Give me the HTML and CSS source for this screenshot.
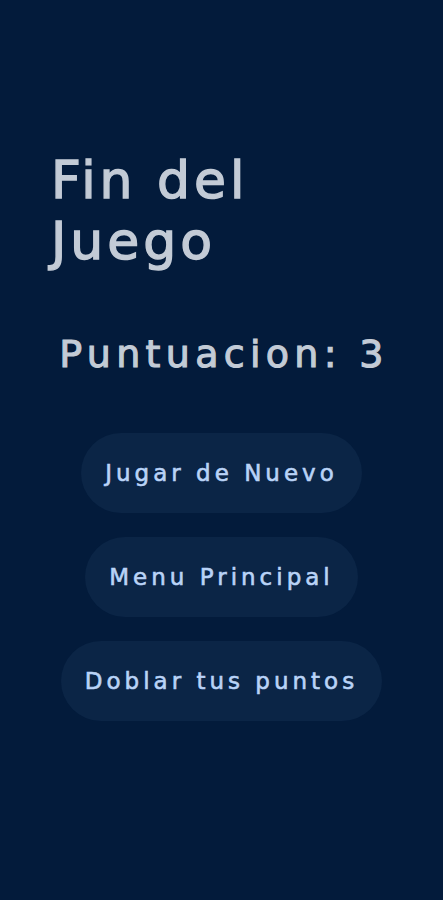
FILE: index.html
```html
<!DOCTYPE html>
<html lang="es">
<head>
  <meta charset="UTF-8">
  <title>Fin del Juego</title>
  <link rel="stylesheet" href="styles.css">
</head>
<body>
  <main class="screen">
    <h1 class="title">Fin del Juego</h1>
    <p class="score">Puntuacion: 3</p>
    <div class="actions">
      <button class="btn">Jugar de Nuevo</button>
      <button class="btn">Menu Principal</button>
      <button class="btn">Doblar tus puntos</button>
    </div>
  </main>
</body>
</html>
```

FILE: styles.css
```css
html, body { margin: 0; padding: 0; }
body { background: #031b3b; font-family: "DejaVu Sans", sans-serif; height: 900px; }
.screen { padding-top: 150px; }
.title { margin: 0; padding-left: 51px; width: 270px; font-size: 52px; line-height: 61px; font-weight: normal; letter-spacing: 4px; color: #c3cbd6; -webkit-text-stroke: 1.4px #c3cbd6; }
.score { margin: 60px 0 0; text-align: center; font-size: 38px; line-height: 44px; letter-spacing: 5.3px; color: #c3cbd6; padding-left: 5px; -webkit-text-stroke: 1.1px #c3cbd6; }
.actions { margin-top: 57px; display: flex; flex-direction: column; align-items: center; gap: 24px; }
.btn { background: #0b2546; color: #b9d3f7; border: none; border-radius: 40px; padding: 26px 24px; font-family: "DejaVu Sans", sans-serif; font-size: 23px; line-height: 28px; letter-spacing: 4px; -webkit-text-stroke: 0.6px #b9d3f7; }
```
